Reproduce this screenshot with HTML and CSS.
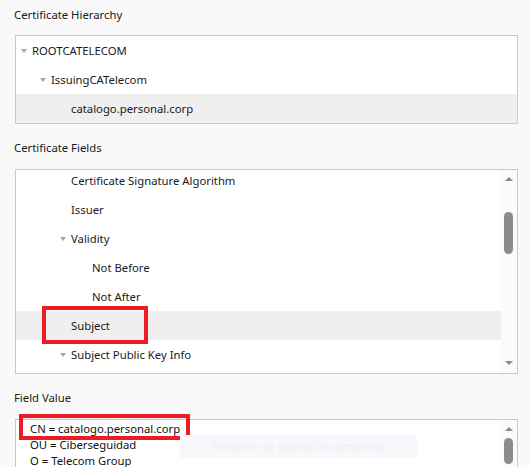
FILE: index.html
```html
<!DOCTYPE html>
<html lang="en">
<head>
    <meta charset="UTF-8">
    <title>Certificate</title>
    <link rel="stylesheet" href="styles.css">
</head>
<body>

    <div class="section">
        <div class="label">Certificate Hierarchy</div>
        <div class="box hierarchy">
            <div class="row lvl0"><span class="caret"></span>ROOTCATELECOM</div>
            <div class="row lvl1"><span class="caret"></span>IssuingCATelecom</div>
            <div class="row lvl2 selected">catalogo.personal.corp</div>
        </div>
    </div>

    <div class="section">
        <div class="label">Certificate Fields</div>
        <div class="box fields">
            <div class="list">
                <div class="row lvl2">Certificate Signature Algorithm</div>
                <div class="row lvl2">Issuer</div>
                <div class="row lvl2"><span class="caret"></span>Validity</div>
                <div class="row lvl3">Not Before</div>
                <div class="row lvl3">Not After</div>
                <div class="row lvl2 selected">Subject</div>
                <div class="row lvl2"><span class="caret"></span>Subject Public Key Info</div>
            </div>
            <div class="scrollbar">
                <span class="arrow up"></span>
                <span class="thumb fields-thumb"></span>
                <span class="arrow down"></span>
            </div>
            <div class="mark subject-mark"></div>
        </div>
    </div>

    <div class="section">
        <div class="label">Field Value</div>
        <div class="box value">
            <div class="value-text">
                <div>CN = catalogo.personal.corp</div>
                <div>OU = Ciberseguidad</div>
                <div>O = Telecom Group</div>
            </div>
            <div class="scrollbar">
                <span class="arrow up"></span>
                <span class="thumb value-thumb"></span>
            </div>
            <div class="mark cn-mark"></div>
        </div>
    </div>

    <div class="toast">Recorte de pantalla completa</div>

</body>
</html>
```

FILE: styles.css
```css
body {
    margin: 0;
    background: #f9f9f9;
    font-family: 'Noto Sans', 'Open Sans', sans-serif;
    font-size: 11.3px;
    color: #1a1a1a;
    width: 530px;
    height: 467px;
    overflow: hidden;
    position: relative;
}

.section {
    padding: 0 12px 0 15px;
}

.label {
    height: 35px;
    line-height: 30px;
    margin-left: -1px;
}

.section + .section .label {
    height: 45px;
    line-height: 48px;
}

.box {
    background: #ffffff;
    border: 1px solid #c9c9c9;
    position: relative;
}

.hierarchy {
    height: 87px;
}

.row {
    height: 29px;
    line-height: 29px;
    white-space: nowrap;
    position: relative;
}

.row.selected {
    background: #efefef;
}

.lvl0 { padding-left: 16px; }
.lvl1 { padding-left: 35px; }
.lvl2 { padding-left: 55px; }
.lvl3 { padding-left: 76px; }

.caret {
    display: inline-block;
    width: 0;
    height: 0;
    border-left: 3px solid transparent;
    border-right: 3px solid transparent;
    border-top: 4px solid #a6a6a6;
    margin-left: -11px;
    margin-right: 5px;
    vertical-align: 2px;
}

.fields {
    height: 203px;
    overflow: hidden;
}

.fields .list {
    margin-top: -4px;
    margin-right: 16px;
}

.scrollbar {
    position: absolute;
    top: 0;
    right: 0;
    bottom: 0;
    width: 16px;
    background: #fbfbfb;
}

.arrow {
    position: absolute;
    left: 4px;
    width: 0;
    height: 0;
    border-left: 4px solid transparent;
    border-right: 4px solid transparent;
}

.arrow.up {
    top: 7px;
    border-bottom: 4px solid #8a8a8a;
}

.arrow.down {
    bottom: 8px;
    border-top: 4px solid #8a8a8a;
}

.thumb {
    position: absolute;
    left: 3px;
    width: 9px;
    border-radius: 5px;
    background: #8b8b8b;
}

.fields-thumb {
    top: 42px;
    height: 42px;
}

.value {
    height: 60px;
    border-bottom: none;
}

.value-text {
    padding: 1px 0 0 14px;
    line-height: 16px;
    color: #111;
}

.value-thumb {
    top: 18px;
    height: 26px;
}

.mark {
    position: absolute;
    border: 4px solid #ec1c24;
    pointer-events: none;
}

.subject-mark {
    left: 26px;
    top: 136px;
    width: 98px;
    height: 30px;
}

.cn-mark {
    left: 3px;
    top: -6px;
    width: 163px;
    height: 18px;
}

.toast {
    position: absolute;
    left: 180px;
    top: 435px;
    width: 205px;
    height: 23px;
    padding-left: 32px;
    line-height: 23px;
    font-size: 12.5px;
    background: #f7f8fb;
    color: #eef0f4;
    white-space: nowrap;
}
```
